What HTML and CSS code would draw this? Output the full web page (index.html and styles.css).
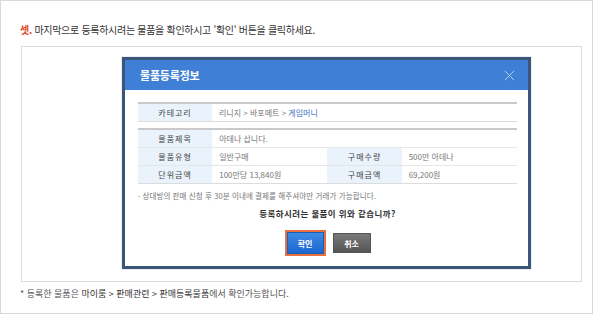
FILE: index.html
```html
<!DOCTYPE html>
<html lang="ko">
<head>
  <meta charset="UTF-8">
  <meta name="viewport" content="width=device-width, initial-scale=1.0">
  <title>물품등록정보</title>
  <link rel="stylesheet" href="styles.css">
</head>
<body>

  <div class="page">
    <p class="step"><span class="step-num">셋.</span> 마지막으로 등록하시려는 물품을 확인하시고 '확인' 버튼을 클릭하세요.</p>

    <div class="shot">
      <div class="dialog">
        <div class="dialog-head">
          <span class="dialog-title">물품등록정보</span>
          <svg class="close" viewBox="0 0 14 14" xmlns="http://www.w3.org/2000/svg">
            <line x1="1" y1="1" x2="13" y2="13" />
            <line x1="13" y1="1" x2="1" y2="13" />
          </svg>
        </div>

        <div class="dialog-body">
          <table class="info">
            <tr>
              <th>카테고리</th>
              <td colspan="3">리니지 &gt; 바포메트 &gt; <span class="hl">게임머니</span></td>
            </tr>
          </table>

          <table class="info">
            <tr>
              <th>물품제목</th>
              <td colspan="3">아데나 삽니다.</td>
            </tr>
            <tr>
              <th>물품유형</th>
              <td>일반구매</td>
              <th>구매수량</th>
              <td>500만 아데나</td>
            </tr>
            <tr>
              <th>단위금액</th>
              <td>100만당 13,840원</td>
              <th>구매금액</th>
              <td>69,200원</td>
            </tr>
          </table>

          <p class="notice">· 상대방의 판매 신청 후 30분 이내에 결제를 해주셔야만 거래가 가능합니다.</p>
          <p class="question">등록하시려는 물품이 위와 같습니까?</p>

          <div class="buttons">
            <span class="btn-ok"><button class="btn btn-blue">확인</button></span>
            <button class="btn btn-gray">취소</button>
          </div>
        </div>
      </div>
    </div>

    <p class="foot">* 등록한 물품은 <b>마이룸 &gt; 판매관련 &gt; 판매등록물품</b>에서 확인가능합니다.</p>
  </div>

</body>
</html>
```

FILE: styles.css
```css
body {
  margin: 0;
  padding: 0;
  background: #fff;
  font-family: "Noto Sans CJK KR", "Noto Sans", sans-serif;
  color: #333;
}

.page {
  box-sizing: border-box;
  width: 593px;
  height: 314px;
  border: 1px solid #d9d9d9;
  padding: 22px 10px 0 19px;
}

.step {
  margin: 0 0 9px;
  font-size: 10px;
  line-height: 14px;
  letter-spacing: -0.3px;
  color: #333;
}

.step-num {
  color: #e2431e;
  font-weight: bold;
}

.shot {
  box-sizing: border-box;
  height: 236px;
  margin-left: 1px;
  border: 1px solid #dcdcdc;
  padding-top: 10px;
}

.dialog {
  width: 403px;
  margin-left: 100px;
  border: 3px solid #3b5678;
  box-shadow: 0 0 1px #8aa0bb;
  background: #fff;
}

.dialog-head {
  height: 30px;
  background: #3f7fd5;
  display: flex;
  align-items: center;
  justify-content: space-between;
  padding: 0 13px 0 15px;
}

.dialog-title {
  color: #fff;
  font-size: 11px;
  font-weight: bold;
  letter-spacing: -0.2px;
}

.close {
  width: 11px;
  height: 11px;
  stroke: #b9d0ee;
  stroke-width: 1.2;
}

.dialog-body {
  padding: 12px 11px 10px 13px;
}

.info {
  width: 100%;
  border-collapse: collapse;
  border-top: 2px solid #c9c9c9;
  border-bottom: 1px solid #dcdcdc;
  font-size: 8px;
  margin-bottom: 6px;
}

.info th,
.info td {
  height: 17px;
  padding: 0;
  border-top: 1px solid #e6e6e6;
  font-weight: normal;
  text-align: left;
}

.info th {
  width: 74px;
  background: #eaf2fb;
  color: #444;
  text-align: center;
  letter-spacing: 1px;
}

.info td {
  padding-left: 7px;
  color: #777;
  width: 108px;
}

.hl {
  color: #3b6fbf;
}

.notice {
  margin: 4px 0 0;
  font-size: 7.5px;
  line-height: 12px;
  color: #777;
  letter-spacing: 0.1px;
}

.question {
  margin: 5px 0 0;
  text-align: center;
  font-size: 8.5px;
  font-weight: bold;
  color: #333;
  letter-spacing: 0.4px;
}

.buttons {
  display: flex;
  justify-content: center;
  align-items: center;
  gap: 7px;
  margin-top: 11px;
}

.btn-ok {
  display: block;
  border: 2px solid #e8703d;
}

.btn {
  display: block;
  border: 0;
  color: #fff;
  font-family: inherit;
  font-size: 8px;
  font-weight: bold;
  height: 20px;
  padding: 0;
}

.btn-blue {
  width: 37px;
  height: 22px;
  margin: 0;
  border: 1px solid #1c5db8;
  background: linear-gradient(#3d8ae6, #1d66cf);
}

.btn-gray {
  width: 38px;
  border: 1px solid #555;
  background: linear-gradient(#7a7a7a, #555);
}

.foot {
  margin: 5px 0 0;
  font-size: 9px;
  color: #555;
  letter-spacing: 0;
}

.foot b {
  font-weight: normal;
  color: #333;
}
```
